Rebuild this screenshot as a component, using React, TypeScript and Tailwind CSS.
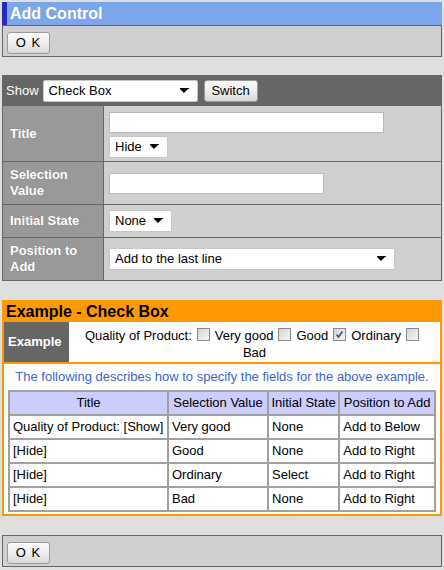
import React from "react";

const font = { fontFamily: '"Liberation Sans", Arial, sans-serif' };

function Btn({ children, w }: { children: React.ReactNode; w: string }) {
  return (
    <button
      className={`h-[22px] ${w} rounded-[3px] border border-[#9a9a9a] bg-gradient-to-b from-[#fbfbfb] via-[#eeeeee] to-[#d8d8d8] text-[13px] leading-none text-black`}
      style={font}
    >
      {children}
    </button>
  );
}

function Arrow() {
  return (
    <svg width="9" height="6" viewBox="0 0 9 6" className="shrink-0">
      <path d="M0 1 H8 L4 5 Z" fill="#000" />
      <rect x="0" y="0" width="9" height="1" fill="#000" />
    </svg>
  );
}

function Select({ label, w }: { label: string; w: string }) {
  return (
    <div
      className={`flex h-[22px] ${w} items-center justify-between rounded-[2px] border border-[#c8c8c8] bg-white pl-[5px] pr-[8px] text-[13px] text-black`}
    >
      <span>{label}</span>
      <Arrow />
    </div>
  );
}

function Check({ checked }: { checked?: boolean }) {
  return (
    <span className="relative mx-[5px] inline-block h-[13px] w-[13px] translate-y-[1px] border border-[#8a8a8a] bg-gradient-to-br from-[#d4d4d4] to-[#f8f8f8] align-baseline">
      {checked && (
        <svg width="11" height="11" viewBox="0 0 11 11" className="absolute left-0 top-0">
          <path d="M2.5 5.5 L4.5 8 L8.5 2.5" stroke="#4a5a9a" strokeWidth="1.8" fill="none" />
        </svg>
      )}
    </span>
  );
}

function OkPanel() {
  return (
    <div className="h-[32px] border border-[#666] bg-[#d0d0d0] pl-[4px] pt-[4px]">
      <Btn w="w-[43px]">
        <span className="tracking-[1px]">O K</span>
      </Btn>
    </div>
  );
}

function Label({ children }: { children: React.ReactNode }) {
  return (
    <div
      className="flex w-[101px] shrink-0 items-center border-r border-[#666] bg-[#999] pl-[7px] text-[13px] font-bold leading-[16px] text-white"
      style={{ textShadow: "0 0 1px #777" }}
    >
      {children}
    </div>
  );
}

export default function App() {
  const rows = [
    ["Quality of Product: [Show]", "Very good", "None", "Add to Below"],
    ["[Hide]", "Good", "None", "Add to Right"],
    ["[Hide]", "Ordinary", "Select", "Add to Right"],
    ["[Hide]", "Bad", "None", "Add to Right"],
  ];
  return (
    <div className="h-[570px] w-[444px] bg-[#dfdfdf] px-[2px] pt-[2px]" style={font}>
      <div className="flex h-[23px] items-center border-l-[5px] border-[#2a2ab8] bg-[#7ba6ea] pl-[3px] text-[16px] font-bold text-white">
        Add Control
      </div>
      <OkPanel />

      <div className="mt-[18px] flex h-[31px] items-center bg-[#666] pl-[4px] text-[13px] text-white">
        <span className="mr-[4px]">Show</span>
        <Select label="Check Box" w="w-[155px]" />
        <div className="ml-[6px]">
          <Btn w="w-[54px]">Switch</Btn>
        </div>
      </div>

      <div className="border-x border-b border-[#666] bg-[#d0d0d0]">
        <div className="flex h-[56px] border-b border-[#666]">
          <Label>Title</Label>
          <div className="flex flex-col gap-[3px] pl-[5px] pt-[6px]">
            <div className="h-[21px] w-[275px] border border-[#b8b8c0] bg-white" />
            <Select label="Hide" w="w-[59px]" />
          </div>
        </div>
        <div className="flex h-[43px] border-b border-[#666]">
          <Label>
            Selection
            <br />
            Value
          </Label>
          <div className="flex items-center pl-[5px]">
            <div className="h-[21px] w-[215px] border border-[#b8b8c0] bg-white" />
          </div>
        </div>
        <div className="flex h-[33px] border-b border-[#666]">
          <Label>Initial State</Label>
          <div className="flex items-center pl-[5px]">
            <Select label="None" w="w-[63px]" />
          </div>
        </div>
        <div className="flex h-[42px]">
          <Label>
            Position to
            <br />
            Add
          </Label>
          <div className="flex items-center pl-[5px]">
            <Select label="Add to the last line" w="w-[286px]" />
          </div>
        </div>
      </div>

      <div className="mt-[19px] border-[2px] border-[#ff9900] bg-white">
        <div className="flex h-[20px] items-center bg-[#ff9900] pl-[2px] text-[16px] font-bold text-black">
          Example - Check Box
        </div>
        <div className="flex h-[42px] border-b-[2px] border-[#ff9900]">
          <div className="flex w-[65px] shrink-0 items-center bg-[#666] pl-[4px] text-[13px] font-bold text-white">
            Example
          </div>
          <div className="flex-1 pt-[5px] text-center text-[13px] leading-[17px] text-black">
            Quality of Product:
            <Check />
            Very good
            <Check />
            Good
            <Check checked />
            Ordinary
            <Check />
            <br />
            Bad
          </div>
        </div>
        <div className="pt-[5px] text-center text-[13px] leading-[16px] text-[#3a66cc]">
          The following describes how to specify the fields for the above example.
        </div>
        <div className="px-[4px] pb-[2px] pt-[5px]">
          <table className="w-[428px] border-separate border-spacing-0 border border-[#a0a0a0] text-[13px] text-black">
            <colgroup>
              <col className="w-[159px]" />
              <col className="w-[101px]" />
              <col className="w-[72px]" />
              <col className="w-[96px]" />
            </colgroup>
            <thead>
              <tr className="h-[24px] bg-[#ccccff]">
                {["Title", "Selection Value", "Initial State", "Position to Add"].map((h) => (
                  <th key={h} className="border border-[#a0a0a0] px-[2px] text-center font-normal">
                    {h}
                  </th>
                ))}
              </tr>
            </thead>
            <tbody>
              {rows.map((r, i) => (
                <tr key={i} className="h-[24px]">
                  {r.map((c, j) => (
                    <td key={j} className="whitespace-nowrap border border-[#a0a0a0] px-[3px]">
                      {c}
                    </td>
                  ))}
                </tr>
              ))}
            </tbody>
          </table>
        </div>
      </div>

      <div className="mt-[19px]">
        <OkPanel />
      </div>
    </div>
  );
}
